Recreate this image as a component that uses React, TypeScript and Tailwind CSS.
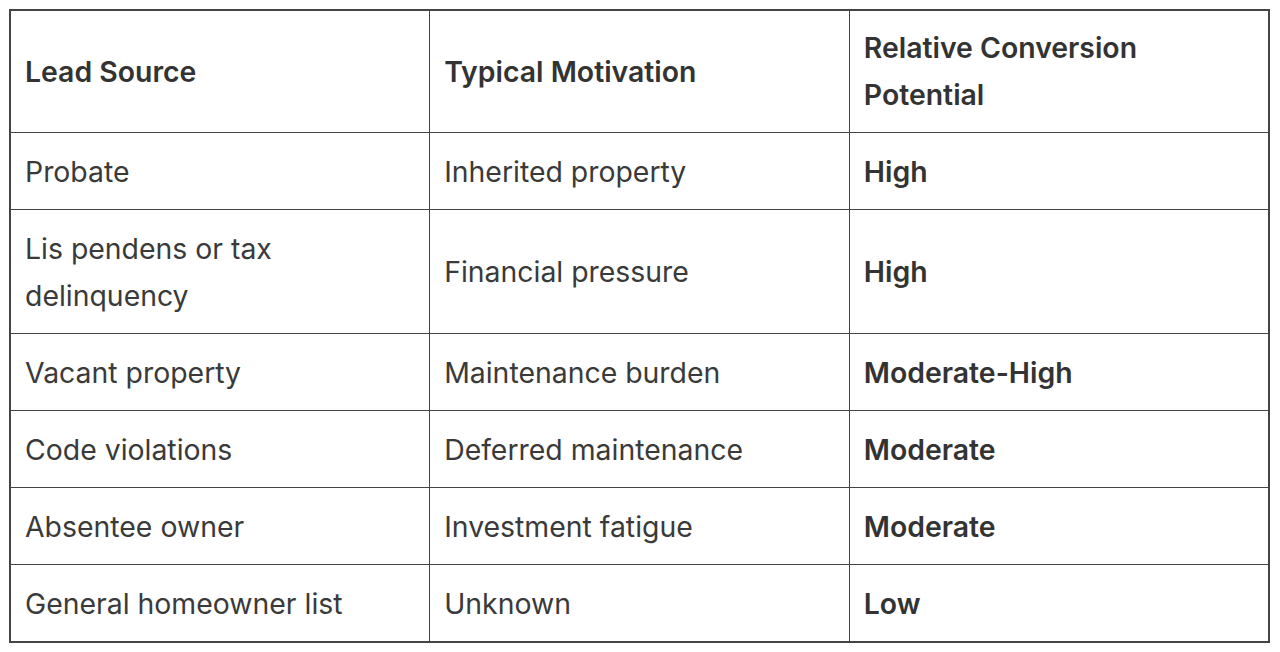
const rows = [
  { source: "Probate", motivation: "Inherited property", potential: "High" },
  { source: "Lis pendens or tax delinquency", motivation: "Financial pressure", potential: "High" },
  { source: "Vacant property", motivation: "Maintenance burden", potential: "Moderate-High" },
  { source: "Code violations", motivation: "Deferred maintenance", potential: "Moderate" },
  { source: "Absentee owner", motivation: "Investment fatigue", potential: "Moderate" },
  { source: "General homeowner list", motivation: "Unknown", potential: "Low" },
];

export default function App() {
  const cell = "border border-[#444] px-[14px] text-left align-middle";
  const head = cell + " pt-[13px] pb-[14px] font-semibold text-[#333]";
  const body = cell + " py-[14.5px]";
  return (
    <div className="w-[1280px] h-[652px] bg-white p-[9px] font-['Inter',sans-serif] text-[28.4px] leading-[47px] text-[#3a3a3a]">
      <table className="w-[1261px] table-fixed border-collapse border-2 border-[#444]">
        <thead>
          <tr>
            <th className={head}>Lead Source</th>
            <th className={head}>Typical Motivation</th>
            <th className={head}>Relative Conversion Potential</th>
          </tr>
        </thead>
        <tbody>
          {rows.map((r) => (
            <tr key={r.source}>
              <td className={body}>{r.source}</td>
              <td className={body}>{r.motivation}</td>
              <td className={body + " font-semibold text-[#333]"}>{r.potential}</td>
            </tr>
          ))}
        </tbody>
      </table>
    </div>
  );
}
